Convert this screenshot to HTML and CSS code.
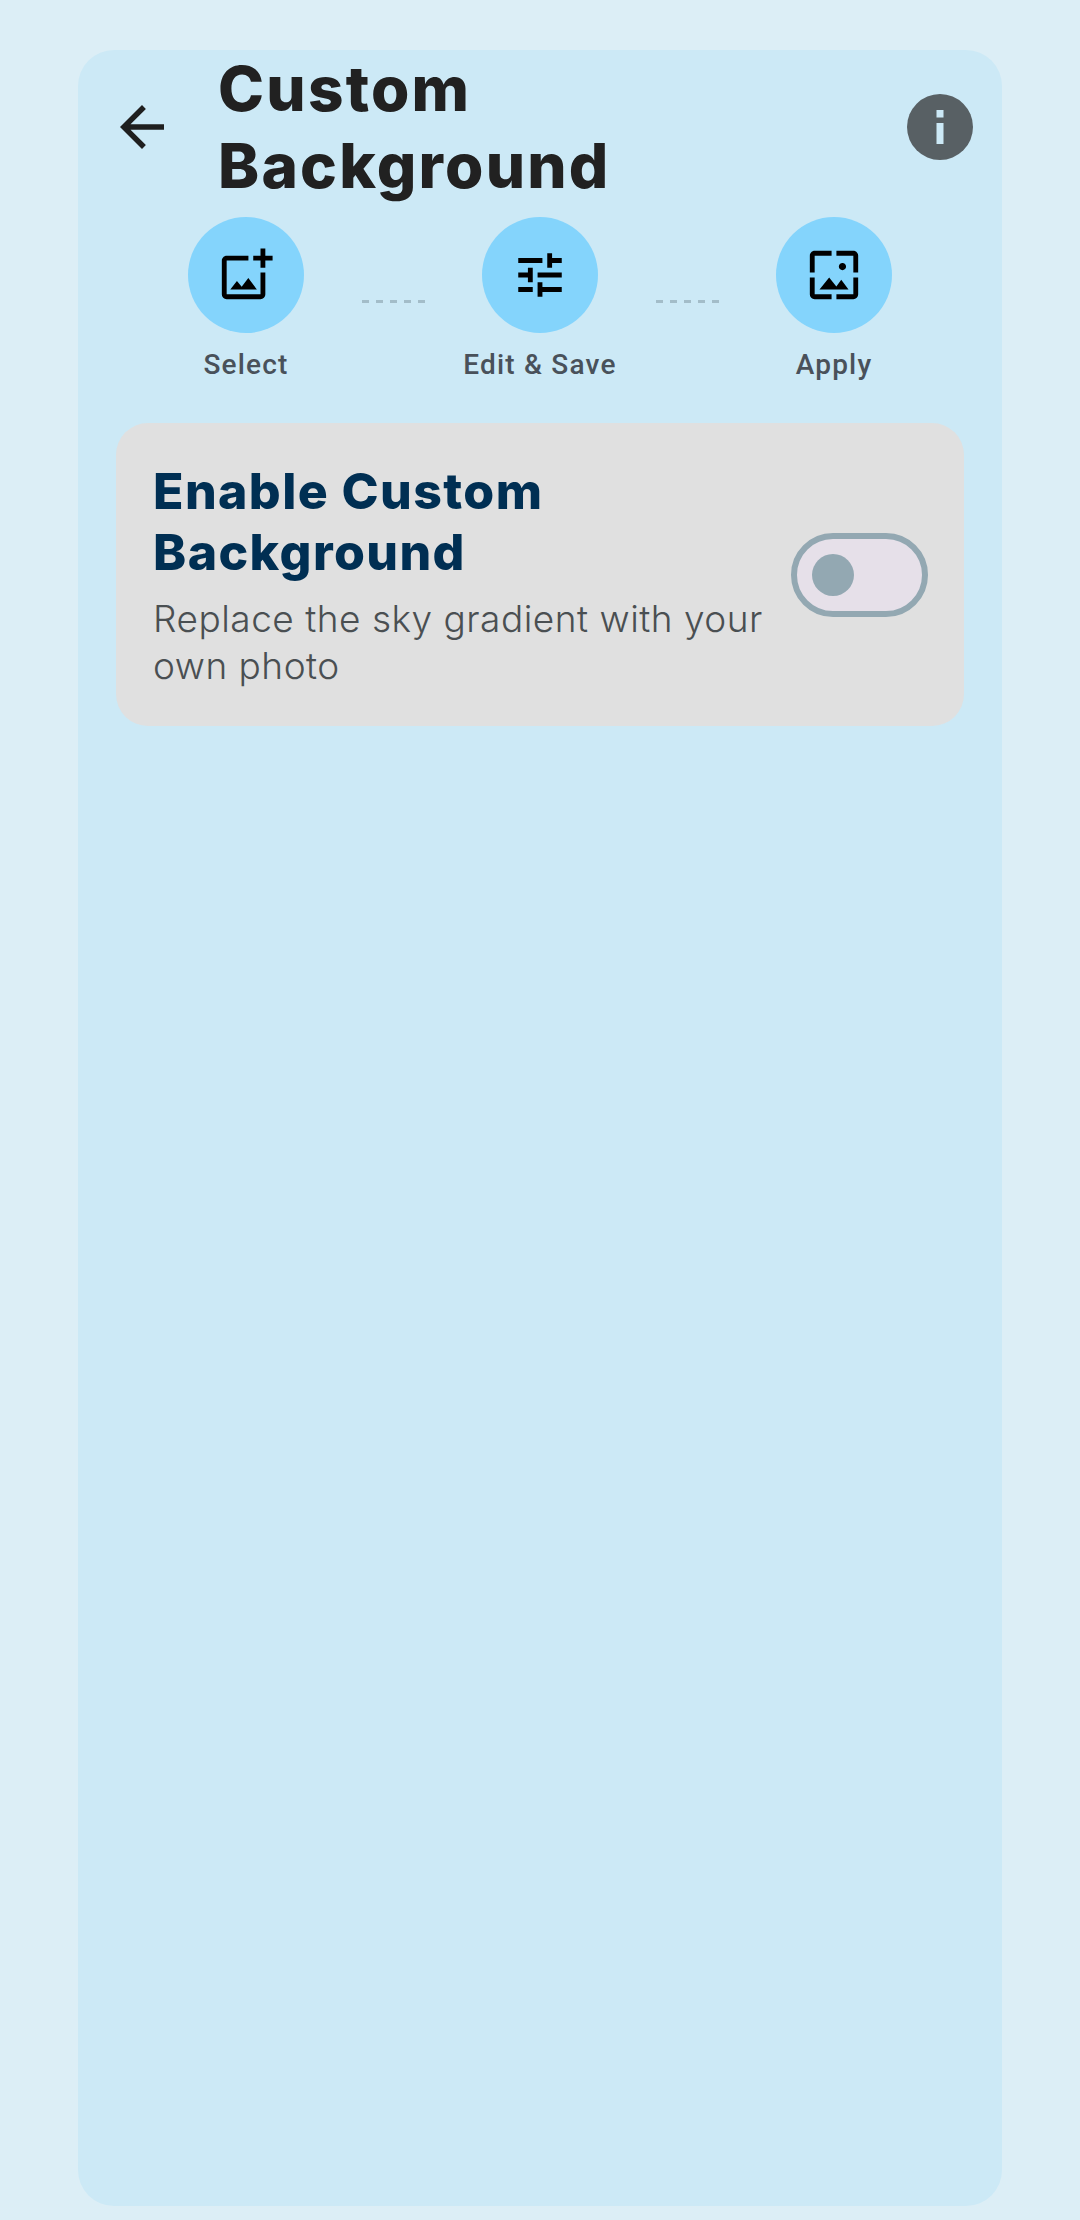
FILE: index.html
```html
<!DOCTYPE HTML>
<html>
	<head>
		<title>Custom Background</title>
		<meta charset="UTF-8">
		<link rel="stylesheet" href="styles.css">
	</head>

	<body>
		<div class="sheet">
			<div class="header">
				<svg class="back" viewBox="0 0 24 24"><path d="M20 11H7.83l5.59-5.59L12 4l-8 8 8 8 1.41-1.41L7.83 13H20v-2z"/></svg>
				<h1 class="page_title">Custom Background</h1>
				<svg class="info" viewBox="0 0 66 66">
					<circle cx="33" cy="33" r="33" fill="#586064"/>
					<rect x="29.5" y="16" width="7" height="7.5" fill="#cce9f6"/>
					<rect x="29.5" y="29" width="7" height="21" fill="#cce9f6"/>
				</svg>
			</div>

			<div class="steps">
				<div class="step">
					<div class="step_circle">
						<svg viewBox="0 0 24 24"><path d="M18 20H4V6h9V4H4c-1.1 0-2 .9-2 2v14c0 1.1.9 2 2 2h14c1.1 0 2-.9 2-2v-9h-2v9zm-7.79-3.17l-1.96-2.36L5.5 18h11l-3.54-4.71zM20 4V1h-2v3h-3c.01.01 0 2 0 2h3v2.99c.01.01 2 0 2 0V6h3V4h-3z"/></svg>
					</div>
					<span class="step_label">Select</span>
				</div>
				<div class="connector"></div>
				<div class="step">
					<div class="step_circle">
						<svg viewBox="0 0 24 24"><path d="M3 17v2h6v-2H3zM3 5v2h10V5H3zm10 16v-2h8v-2h-8v-2h-2v6h2zM7 9v2H3v2h4v2h2V9H7zm14 4v-2H11v2h10zm-6-4h2V7h4V5h-4V3h-2v6z"/></svg>
					</div>
					<span class="step_label">Edit &amp; Save</span>
				</div>
				<div class="connector"></div>
				<div class="step">
					<div class="step_circle">
						<svg viewBox="0 0 24 24"><path d="M4 4h7V2H4c-1.1 0-2 .9-2 2v7h2V4zm6 9l-4 5h12l-3-4-2.03 2.71L10 13zm7-4.5c0-.83-.67-1.5-1.5-1.5S14 7.67 14 8.5s.67 1.5 1.5 1.5S17 9.33 17 8.5zM20 2h-7v2h7v7h2V4c0-1.1-.9-2-2-2zm0 18h-7v2h7c1.1 0 2-.9 2-2v-7h-2v7zM4 13H2v7c0 1.1.9 2 2 2h7v-2H4v-7z"/></svg>
					</div>
					<span class="step_label">Apply</span>
				</div>
			</div>

			<div class="card">
				<div class="card_text">
					<h2 class="card_title">Enable Custom Background</h2>
					<p class="card_desc">Replace the sky gradient with your own photo</p>
				</div>
				<div class="toggle"><span class="thumb"></span></div>
			</div>
		</div>
	</body>
</html>
```

FILE: styles.css
```css
html, body
	{
		margin: 0;
		height: 100%;
	}
body
	{
		box-sizing: border-box;
		display: flex;
		padding: 50px 78px 14px;
		background-color: #dceef6;
		font-family: Roboto, "Liberation Sans", sans-serif;
	}
.sheet
	{
		flex: 1;
		padding: 0 38px;
		border-radius: 36px;
		background-color: #cce9f6;
	}

.header
	{
		display: flex;
		align-items: center;
		height: 154px;
		margin: 0 -9px 0 -7px;
	}
.back
	{
		width: 66px;
		height: 66px;
		margin-right: 43px;
		flex-shrink: 0;
		fill: #1f1f1f;
	}
.page_title
	{
		flex: 1;
		width: 0;
		margin: 0;
		padding-right: 280px;
		font-family: Inter, Roboto, sans-serif;
		font-size: 62px;
		line-height: 77px;
		font-weight: 800;
		letter-spacing: 2.2px;
		color: #212121;
	}
.info
	{
		width: 66px;
		height: 66px;
		flex-shrink: 0;
	}

.steps
	{
		display: flex;
		justify-content: center;
		margin-top: 13px;
	}
.step
	{
		width: 160px;
		display: flex;
		flex-direction: column;
		align-items: center;
	}
.step_circle
	{
		width: 116px;
		height: 116px;
		display: flex;
		align-items: center;
		justify-content: center;
		border-radius: 50%;
		background-color: #84d4fc;
	}
.step_circle svg
	{
		width: 58px;
		height: 58px;
		fill: #000;
	}
.step_label
	{
		margin-top: 15px;
		font-size: 28px;
		line-height: 34px;
		font-weight: 500;
		letter-spacing: 1.2px;
		color: #49515a;
		white-space: nowrap;
	}
.connector
	{
		width: 63px;
		height: 3px;
		margin: 83px 35px 0 36px;
		background: repeating-linear-gradient(to right, #a3bdc9 0, #a3bdc9 7px, transparent 7px, transparent 14px);
	}

.card
	{
		display: flex;
		align-items: center;
		gap: 16px;
		margin-top: 41px;
		padding: 38px 36px 37px 37px;
		border-radius: 32px;
		background-color: #e0e0e0;
	}
.card_text
	{
		flex: 1;
	}
.card_title
	{
		margin: 0;
		font-family: Inter, Roboto, sans-serif;
		font-size: 50px;
		line-height: 61px;
		font-weight: 800;
		letter-spacing: 1.4px;
		color: #002f53;
	}
.card_desc
	{
		margin: 12px 0 0;
		font-family: Inter, Roboto, sans-serif;
		font-size: 37px;
		line-height: 47px;
		font-weight: 300;
		letter-spacing: 0.5px;
		color: #4a4f52;
	}
.toggle
	{
		box-sizing: border-box;
		width: 137px;
		height: 84px;
		display: flex;
		align-items: center;
		padding-left: 15px;
		border: 6px solid #93a8b2;
		border-radius: 42px;
		background-color: #e6e0e9;
	}
.thumb
	{
		width: 42px;
		height: 42px;
		border-radius: 50%;
		background-color: #93a8b2;
	}
```
